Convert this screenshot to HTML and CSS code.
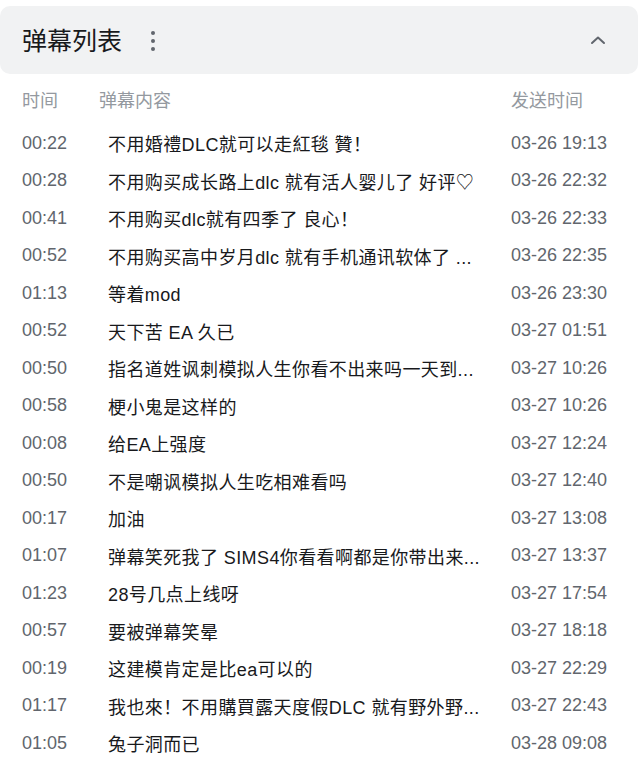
FILE: index.html
```html
<!DOCTYPE html>
<html lang="zh-CN">
<head>
  <meta charset="UTF-8" />
  <meta name="viewport" content="width=device-width, initial-scale=1.0"/>
  <title>弹幕列表</title>
  <link rel="stylesheet" href="styles.css">
</head>
<body>
  <div class="panel">
    <div class="panel-head">
      <h2 class="title">弹幕列表</h2>
      <span class="more">
        <svg width="6" height="22" viewBox="0 0 6 22">
          <circle cx="3" cy="3" r="2" />
          <circle cx="3" cy="11" r="2" />
          <circle cx="3" cy="19" r="2" />
        </svg>
      </span>
      <span class="toggle">
        <svg width="16" height="10" viewBox="0 0 16 10">
          <polyline points="2,8 8,2.5 14,8" />
        </svg>
      </span>
    </div>

    <div class="list-head">
      <span class="col-time">时间</span>
      <span class="col-text">弹幕内容</span>
      <span class="col-date">发送时间</span>
    </div>

    <div class="rows">
      <div class="row"><span class="time">00:22</span><span class="text">不用婚禮DLC就可以走紅毯 贊！</span><span class="date">03-26 19:13</span></div>
      <div class="row"><span class="time">00:28</span><span class="text">不用购买成长路上dlc 就有活人婴儿了 好评♡</span><span class="date">03-26 22:32</span></div>
      <div class="row"><span class="time">00:41</span><span class="text">不用购买dlc就有四季了 良心！</span><span class="date">03-26 22:33</span></div>
      <div class="row"><span class="time">00:52</span><span class="text">不用购买高中岁月dlc 就有手机通讯软体了 ...</span><span class="date">03-26 22:35</span></div>
      <div class="row"><span class="time">01:13</span><span class="text">等着mod</span><span class="date">03-26 23:30</span></div>
      <div class="row"><span class="time">00:52</span><span class="text">天下苦 EA 久已</span><span class="date">03-27 01:51</span></div>
      <div class="row"><span class="time">00:50</span><span class="text">指名道姓讽刺模拟人生你看不出来吗一天到...</span><span class="date">03-27 10:26</span></div>
      <div class="row"><span class="time">00:58</span><span class="text">梗小鬼是这样的</span><span class="date">03-27 10:26</span></div>
      <div class="row"><span class="time">00:08</span><span class="text">给EA上强度</span><span class="date">03-27 12:24</span></div>
      <div class="row"><span class="time">00:50</span><span class="text">不是嘲讽模拟人生吃相难看吗</span><span class="date">03-27 12:40</span></div>
      <div class="row"><span class="time">00:17</span><span class="text">加油</span><span class="date">03-27 13:08</span></div>
      <div class="row"><span class="time">01:07</span><span class="text">弹幕笑死我了 SIMS4你看看啊都是你带出来...</span><span class="date">03-27 13:37</span></div>
      <div class="row"><span class="time">01:23</span><span class="text">28号几点上线呀</span><span class="date">03-27 17:54</span></div>
      <div class="row"><span class="time">00:57</span><span class="text">要被弹幕笑晕</span><span class="date">03-27 18:18</span></div>
      <div class="row"><span class="time">00:19</span><span class="text">这建模肯定是比ea可以的</span><span class="date">03-27 22:29</span></div>
      <div class="row"><span class="time">01:17</span><span class="text">我也來！不用購買露天度假DLC 就有野外野...</span><span class="date">03-27 22:43</span></div>
      <div class="row"><span class="time">01:05</span><span class="text">兔子洞而已</span><span class="date">03-28 09:08</span></div>
    </div>
  </div>
</body>
</html>
```

FILE: styles.css
```css
body {
  margin: 0;
  background-color: #ffffff;
  font-family: "Liberation Sans", "Noto Sans CJK SC", Arial, sans-serif;
}
.panel {
  width: 638px;
  padding-top: 6px;
}
.panel-head {
  height: 68px;
  display: flex;
  align-items: center;
  padding: 0 22px;
  background-color: #f1f2f3;
  border-radius: 10px;
}
.title {
  margin: 0;
  margin-top: 3px;
  font-size: 25px;
  font-weight: normal;
  color: #18191c;
  line-height: 1;
}
.more {
  display: flex;
  margin-left: 28px;
  margin-top: 2px;
}
.more circle {
  fill: #61666d;
}
.toggle {
  display: flex;
  margin-left: auto;
  margin-right: 10px;
}
.toggle polyline {
  fill: none;
  stroke: #61666d;
  stroke-width: 2;
  stroke-linecap: round;
  stroke-linejoin: round;
}
.list-head,
.row {
  display: grid;
  grid-template-columns: 86px minmax(0, 1fr) 127px;
  align-items: center;
  padding-left: 22px;
  font-size: 18px;
}
.list-head {
  height: 38px;
  margin-top: 6px;
  color: #9499a0;
}
.list-head .col-text {
  margin-left: -9px;
}
.rows {
  margin-top: 6.5px;
}
.row {
  height: 37.5px;
}
.time,
.date {
  color: #61666d;
}
.text {
  color: #18191c;
  padding-right: 16px;
  letter-spacing: 0.4px;
  white-space: nowrap;
  overflow: hidden;
  text-overflow: ellipsis;
}
```
